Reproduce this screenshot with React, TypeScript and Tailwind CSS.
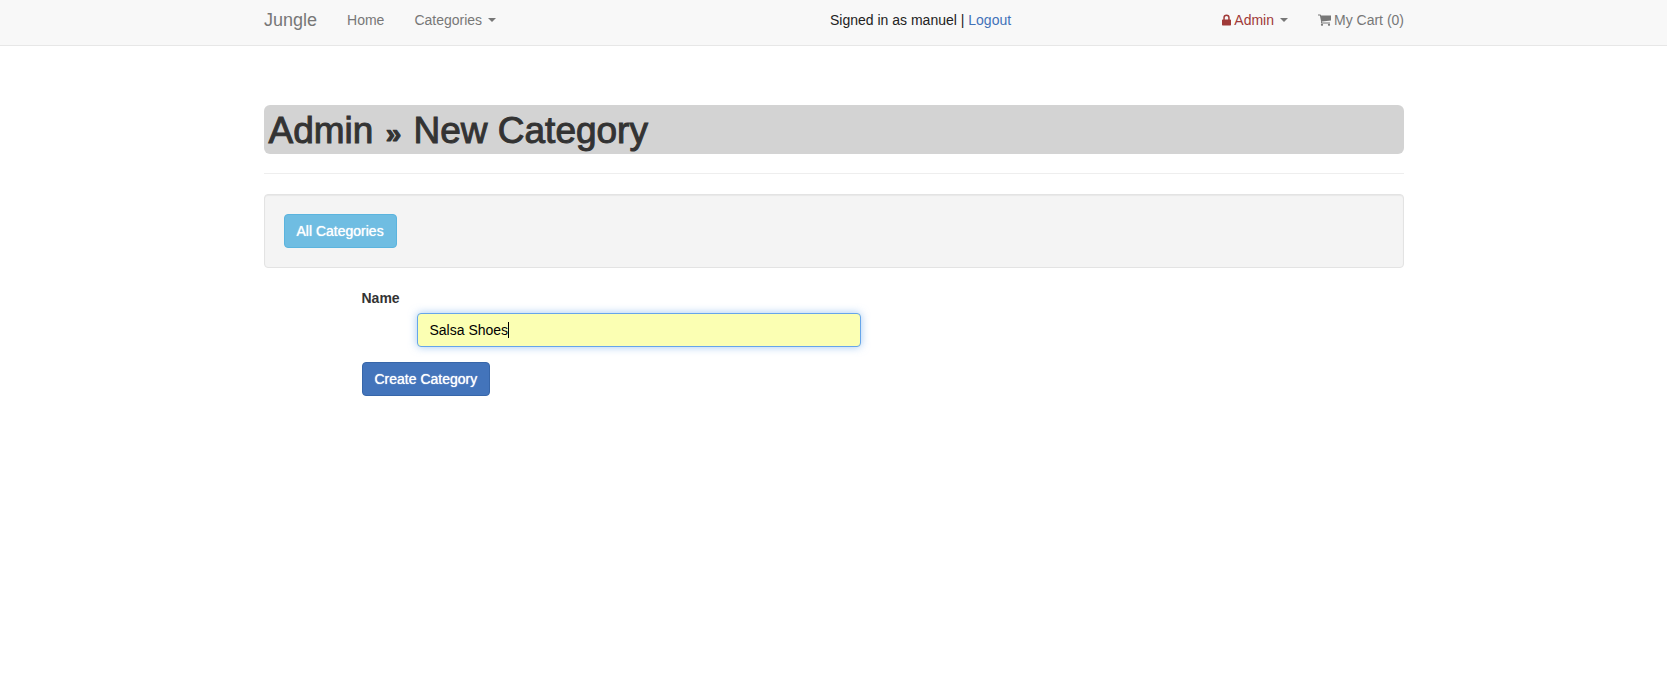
function Caret() {
  return (
    <svg viewBox="0 0 8 4" className="h-1 w-2" fill="currentColor" aria-hidden="true">
      <path d="M0 0h8L4 4z" />
    </svg>
  );
}

function Navbar() {
  return (
    <nav className="border-b border-[#e7e7e7] bg-[#f8f8f8] text-[#777]">
      <div className="mx-auto flex h-[45px] max-w-[1141px] items-start pt-[10px] pl-px">
        <div className="flex w-[566px] shrink-0 items-center gap-[30px]">
          <a href="#" className="text-lg leading-5">Jungle</a>
          <a href="#">Home</a>
          <button type="button" className="flex items-center gap-[6px]">
            Categories
            <Caret />
          </button>
        </div>
        <p className="whitespace-nowrap text-[#222]">
          Signed in as manuel | <a href="#" className="text-[#4272b8]">Logout</a>
        </p>
        <div className="ml-auto flex items-center gap-[30px]">
          <button type="button" className="flex items-center gap-[6px]">
            <span className="flex items-center gap-[3px] text-[#a03a38]">
              <svg viewBox="0 0 9 12" className="h-3 w-[9px]" fill="currentColor" aria-hidden="true">
                <path d="M1.3 5.5V3.6a3.2 3.2 0 0 1 6.4 0v1.9h.6q.7 0 .7.7v4.6q0 .7-.7.7H.7q-.7 0-.7-.7V6.2q0-.7.7-.7zm1.5 0h3.4V3.6a1.7 1.7 0 0 0-3.4 0z" />
              </svg>
              Admin
            </span>
            <Caret />
          </button>
          <a href="#" className="flex items-center gap-[3px]">
            <svg viewBox="0 0 13 12" className="h-3 w-[13px]" fill="currentColor" aria-hidden="true">
              <path d="M0 .5h2.3q.5 0 .6.5l.1.6h10v4.9L4 7.6l.1.8H12v1H3.4q-.5 0-.4-.6l.2-.7L1.9 1.5H0z" />
              <circle cx="4" cy="10.8" r="1.1" />
              <circle cx="11" cy="10.8" r="1.1" />
            </svg>
            My Cart (0)
          </a>
        </div>
      </div>
    </nav>
  );
}

export default function App() {
  return (
    <div className="min-h-screen bg-white font-['Liberation_Sans',Arial,sans-serif] text-sm leading-5 text-[#333]">
      <Navbar />
      <main className="mx-auto max-w-[1140px] pt-[59px]">
        <header className="border-b border-[#eee] pb-[19px]">
          <h1 className="rounded-md bg-[#d3d3d3] px-[5px] pt-[6px] pb-1 text-[37px] leading-[39px] [-webkit-text-stroke:1px_#333]">
            Admin <span className="mx-0.5 text-[28px] leading-none font-bold">»</span> New Category
          </h1>
        </header>
        <section className="mt-5 rounded border border-[#e3e3e3] bg-[#f4f4f4] p-[19px] shadow-[inset_0_1px_1px_rgba(0,0,0,0.05)]">
          <a
            href="#"
            className="inline-block rounded border border-[#5bb4de] bg-[#6fbde2] px-3 py-[6px] align-top text-white [text-shadow:0_0_1px_#fff]"
          >
            All Categories
          </a>
        </section>
        <form className="mt-5 pl-[98px]" onSubmit={(event) => event.preventDefault()}>
          <label htmlFor="category-name" className="block font-bold">Name</label>
          <div className="mt-[5px] pl-[55px]">
            <div className="relative w-[444px] max-w-full">
              <input
                id="category-name"
                type="text"
                autoFocus
                defaultValue="Salsa Shoes"
                className="block h-[34px] w-full rounded border border-[#66a5ea] bg-[#fbffb3] px-3 text-black caret-transparent shadow-[0_0_8px_rgba(102,165,234,0.6)] outline-none"
              />
              <span className="pointer-events-none absolute top-[9px] left-[91px] h-4 w-px bg-black" aria-hidden="true" />
            </div>
          </div>
          <button
            type="submit"
            className="mt-[15px] rounded border border-[#3766a9] bg-[#4374bb] px-3 py-[6px] text-white [text-shadow:0_0_1px_#fff]"
          >
            Create Category
          </button>
        </form>
      </main>
    </div>
  );
}
